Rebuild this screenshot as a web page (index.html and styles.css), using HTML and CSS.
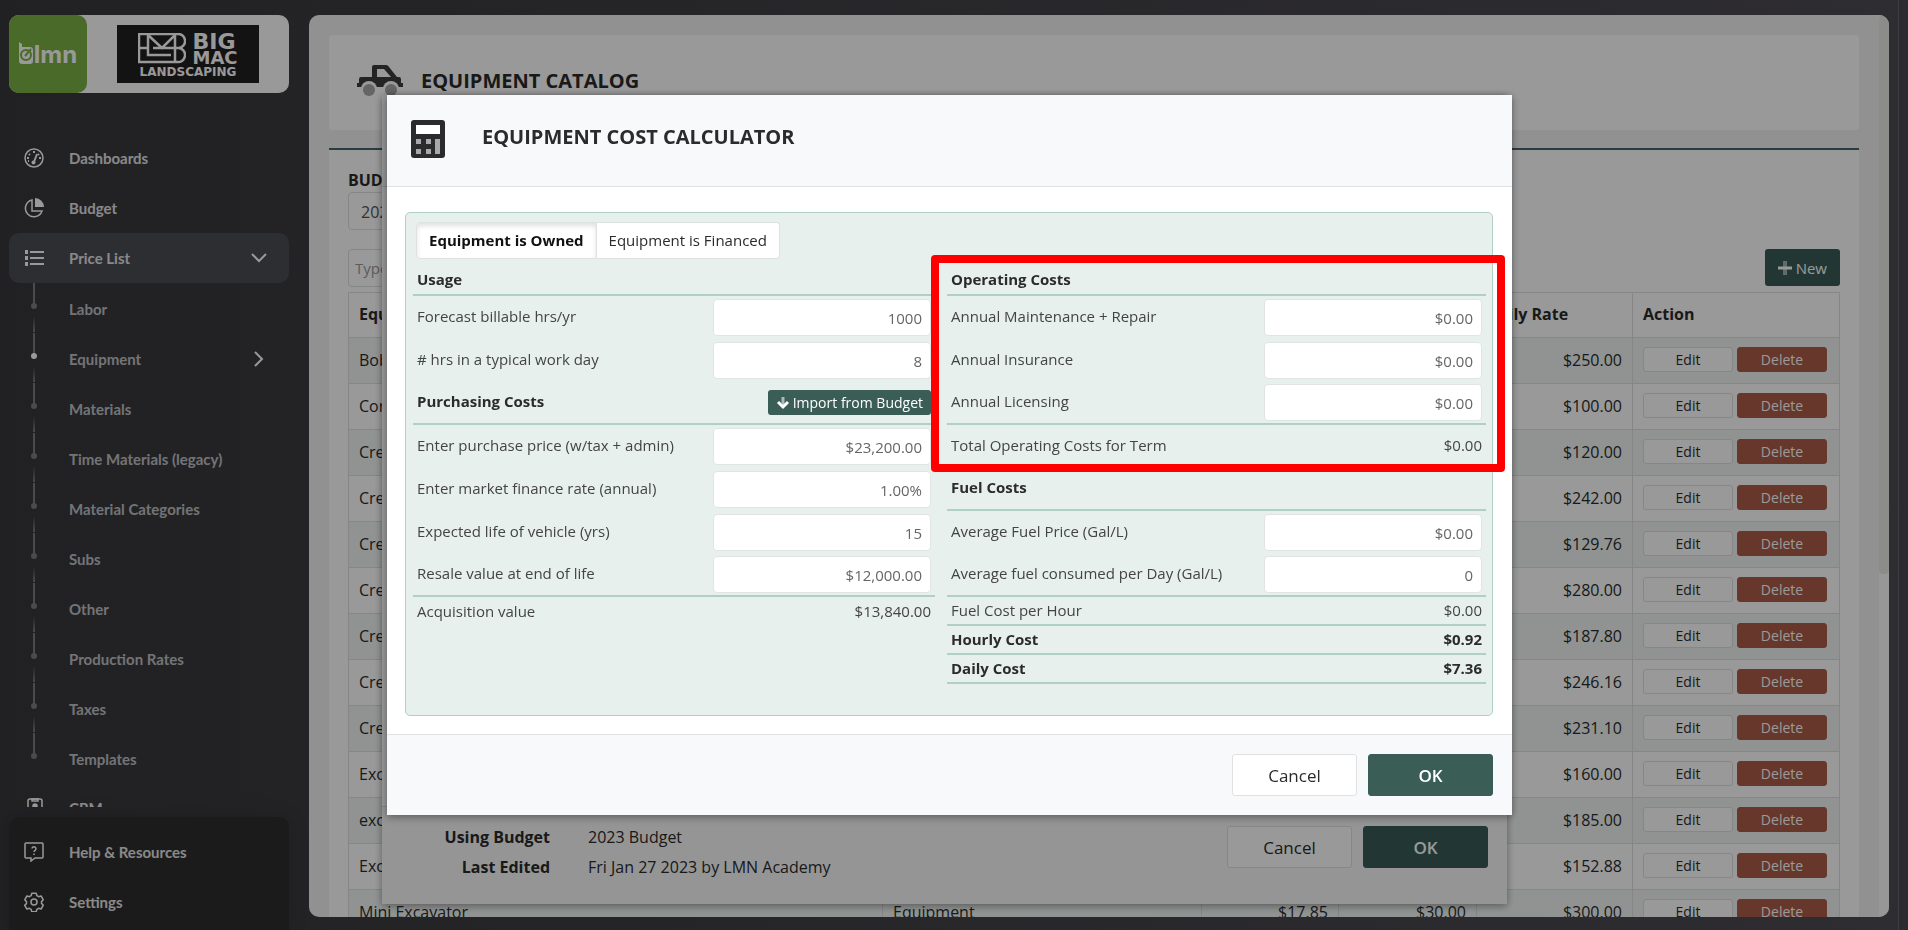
FILE: index.html
```
<!DOCTYPE html>
<html lang="en">
<head>
    <meta charset="UTF-8">
    <meta name="viewport" content="width=device-width, initial-scale=1.0">
    <title>LMN - Equipment Catalog</title>
    <link rel="stylesheet" href="styles.css">
</head>
<body>

<div class="app">
    <aside class="sidebar">
        <div class="brand">
            <div class="brand-lmn">
                <svg width="15" height="24" viewBox="0 0 15 24">
                    <path d="M0 0l3 2v3h8q3 0 3 3v11q0 3-3 3H3q-3 0-3-3z" fill="#fff"/>
                    <circle cx="7" cy="13" r="5" fill="none" stroke="#7ab143" stroke-width="2"/>
                    <path d="M6 14l6-7" stroke="#7ab143" stroke-width="2"/>
                </svg>
                <span>lmn</span>
            </div>
            <div class="brand-company">
                <div class="company-logo">
                    <div class="company-top">
                        <svg width="48" height="31" viewBox="0 0 48 31" fill="none" stroke="#fff" stroke-width="2.500">
                            <path d="M1 1h38a7 7 0 0 1 2 14a7 7 0 0 1-2 14H1z"/>
                            <path d="M10 1v21h23M10 2l14 13L37 2v27M1 15h9M15 15h26"/>
                        </svg>
                        <div class="company-name">
                            <span class="big">BIG</span>
                            <span class="mac">MAC</span>
                        </div>
                    </div>
                    <span class="landscaping">LANDSCAPING</span>
                </div>
            </div>
        </div>

        <nav class="menu">
            <a href="#" class="menu-item">
                <svg class="icon" viewBox="0 0 20 20">
                    <circle cx="10" cy="10" r="9"/>
                    <path d="M10 14l3-8" stroke-width="2"/>
                    <circle cx="9.500" cy="14.500" r="2" fill="#fff" stroke="none"/>
                    <path d="M3 10h2M5 6l1 1M9 4h2M15 10h2M15 6l-1 1M4 13l1 0" stroke-width="2"/>
                </svg>
                Dashboards
            </a>
            <a href="#" class="menu-item">
                <svg class="icon" viewBox="0 0 20 20">
                    <path d="M8 2a8.500 8.500 0 1 0 10 11H8z"/>
                    <path d="M11 0a9 9 0 0 1 9 9h-9z" fill="#fff" stroke="none"/>
                </svg>
                Budget
            </a>
            <a href="#" class="menu-item active">
                <svg class="icon" viewBox="0 0 20 20">
                    <path d="M6 4h14M6 10h14M6 16h14" stroke-width="2"/>
                    <path d="M1 4h3M1 10h3M1 16h3" stroke-width="4"/>
                </svg>
                Price List
                <svg class="chevron" width="16" height="10" viewBox="0 0 16 10"><path d="M1 1l7 7 7-7"/></svg>
            </a>
            <a href="#" class="sub-item">Labor</a>
            <a href="#" class="sub-item current">Equipment
                <svg class="chevron" width="16" height="16" viewBox="0 0 16 16"><path d="M4 1l7 7-7 7"/></svg>
            </a>
            <a href="#" class="sub-item">Materials</a>
            <a href="#" class="sub-item">Time Materials (legacy)</a>
            <a href="#" class="sub-item">Material Categories</a>
            <a href="#" class="sub-item">Subs</a>
            <a href="#" class="sub-item">Other</a>
            <a href="#" class="sub-item">Production Rates</a>
            <a href="#" class="sub-item">Taxes</a>
            <a href="#" class="sub-item">Templates</a>
            <a href="#" class="menu-item">
                <svg class="icon" viewBox="0 0 20 20">
                    <rect x="4" y="1" width="14" height="18" rx="2"/>
                    <path d="M8 1h6v2H8z"/>
                    <circle cx="11" cy="8" r="2" fill="#fff"/>
                    <path d="M7 15a4 4 0 0 1 8 0z" fill="#fff"/>
                </svg>
                CRM
            </a>
        </nav>

        <div class="menu-bottom">
            <a href="#" class="menu-item">
                <svg class="icon" viewBox="0 0 20 20">
                    <path d="M2 1h16a1 1 0 0 1 1 1v13a1 1 0 0 1-1 1h-7l-4 3v-3H2a1 1 0 0 1-1-1V2a1 1 0 0 1 1-1z"/>
                    <path d="M8 6.500a2 2 0 1 1 3 2q-1 .5-1 1.500M10 11.500v1.500"/>
                </svg>
                Help &amp; Resources
            </a>
            <a href="#" class="menu-item">
                <svg class="icon" viewBox="0 0 20 20">
                    <path d="M7.800 1.200h4.400l.7 2.500 1.700 1 2.500-.7 2.200 3.800-1.800 1.800v1.800l1.800 1.800-2.200 3.800-2.500-.7-1.700 1-.7 2.500H7.800l-.7-2.500-1.700-1-2.500.7L.7 13.400l1.800-1.800V9.600L.7 7.800 2.900 4l2.500.7 1.700-1z" stroke-linejoin="round"/>
                    <circle cx="10" cy="10" r="3"/>
                </svg>
                Settings
            </a>
        </div>
    </aside>

    <main class="content">
        <header class="page-header">
            <svg width="46" height="32" viewBox="0 0 46 32">
                <path d="M17 0h12q2 0 3 2l8 10h2q2 0 2 2v4h2v4H0v-4h2v-4q0-2 2-2h11V2q0-2 2-2zM20 4v8h14l-7-8z" fill="#3c3c3c" fill-rule="evenodd"/>
                <circle cx="12" cy="24" r="8" fill="#fff"/>
                <circle cx="34" cy="24" r="8" fill="#fff"/>
                <circle cx="12" cy="25" r="6" fill="#a8a8a8"/>
                <circle cx="34" cy="25" r="6" fill="#a8a8a8"/>
            </svg>
            <h1>EQUIPMENT CATALOG</h1>
        </header>

        <section class="catalog">
            <label class="catalog-label" for="budget">BUDGET</label>
            <select id="budget" class="field">
                <option>2023 Budget</option>
            </select>
            <div class="toolbar">
                <input type="text" class="field filter" placeholder="Type to filter" aria-label="Filter equipment">
                <button class="btn-new">
                    <svg width="14" height="14" viewBox="0 0 14 14">
                        <path d="M7 0v14" stroke="#a0b4ae" stroke-width="4"/>
                        <path d="M0 7h14" stroke="#fff" stroke-width="3"/>
                    </svg>
                    New
                </button>
            </div>

            <table class="equipment">
                <colgroup>
                    <col><col class="col-type"><col class="col-cost"><col class="col-rate"><col class="col-daily"><col class="col-action">
                </colgroup>
                <thead>
                    <tr><th>Equipment</th><th>Type</th><th>Cost</th><th>Hourly Rate</th><th>Daily Rate</th><th>Action</th></tr>
                </thead>
                <tbody>
                    <tr><td>Bobcat</td><td>Equipment</td><td></td><td></td><td>$250.00</td><td><button class="edit">Edit</button><button class="delete">Delete</button></td></tr>
                    <tr><td>Concrete Saw</td><td>Equipment</td><td></td><td></td><td>$100.00</td><td><button class="edit">Edit</button><button class="delete">Delete</button></td></tr>
                    <tr><td>Crew Truck</td><td>Equipment</td><td></td><td></td><td>$120.00</td><td><button class="edit">Edit</button><button class="delete">Delete</button></td></tr>
                    <tr><td>Crew Truck</td><td>Equipment</td><td></td><td></td><td>$242.00</td><td><button class="edit">Edit</button><button class="delete">Delete</button></td></tr>
                    <tr><td>Crew Truck</td><td>Equipment</td><td></td><td></td><td>$129.76</td><td><button class="edit">Edit</button><button class="delete">Delete</button></td></tr>
                    <tr><td>Crew Truck</td><td>Equipment</td><td></td><td></td><td>$280.00</td><td><button class="edit">Edit</button><button class="delete">Delete</button></td></tr>
                    <tr><td>Crew Truck</td><td>Equipment</td><td></td><td></td><td>$187.80</td><td><button class="edit">Edit</button><button class="delete">Delete</button></td></tr>
                    <tr><td>Crew Truck</td><td>Equipment</td><td></td><td></td><td>$246.16</td><td><button class="edit">Edit</button><button class="delete">Delete</button></td></tr>
                    <tr><td>Crew Truck</td><td>Equipment</td><td></td><td></td><td>$231.10</td><td><button class="edit">Edit</button><button class="delete">Delete</button></td></tr>
                    <tr><td>Excavator</td><td>Equipment</td><td></td><td></td><td>$160.00</td><td><button class="edit">Edit</button><button class="delete">Delete</button></td></tr>
                    <tr><td>excavator</td><td>Equipment</td><td></td><td></td><td>$185.00</td><td><button class="edit">Edit</button><button class="delete">Delete</button></td></tr>
                    <tr><td>Excavator</td><td>Equipment</td><td></td><td></td><td>$152.88</td><td><button class="edit">Edit</button><button class="delete">Delete</button></td></tr>
                    <tr><td>Mini Excavator</td><td>Equipment</td><td>$17.85</td><td>$30.00</td><td>$300.00</td><td><button class="edit">Edit</button><button class="delete">Delete</button></td></tr>
                </tbody>
            </table>
        </section>
        <div class="scroll-track"><div class="scroll-thumb"></div></div>
    </main>
    <div class="gutter"></div>
</div>

<!-- Edit equipment dialog, sits under the calculator -->
<div class="layer layer-edit">
    <div class="modal">
        <div class="modal-header"></div>
        <div class="modal-body"></div>
        <div class="modal-footer edit-footer">
            <dl class="meta">
                <dt>Using Budget</dt><dd>2023 Budget</dd>
                <dt>Last Edited</dt><dd>Fri Jan 27 2023 by LMN Academy</dd>
            </dl>
            <button class="btn">Cancel</button>
            <button class="btn btn-primary">OK</button>
        </div>
    </div>
</div>

<!-- Cost calculator dialog -->
<div class="layer layer-calculator">
    <div class="modal" role="dialog" aria-labelledby="calc-title">
        <div class="modal-header">
            <svg width="34" height="38" viewBox="0 0 34 38">
                <rect width="34" height="38" rx="3" fill="#2b2b2d"/>
                <path d="M5 5h24v9H5z" fill="#fff"/>
                <path d="M5 19h5v5H5zM15 19h5v5h-5zM5 29h5v5H5zM15 29h5v5h-5zM24 19h5v15h-5z" fill="#a8a9ab"/>
            </svg>
            <h2 id="calc-title">EQUIPMENT COST CALCULATOR</h2>
        </div>

        <div class="modal-body">
            <div class="calculator">
                <div class="tabs">
                    <button class="tab selected">Equipment is Owned</button><button class="tab">Equipment is Financed</button>
                </div>
                <div class="columns">
                    <div class="column">
                        <div class="row heading first"><h3>Usage</h3></div>
                        <div class="row"><label for="hours">Forecast billable hrs/yr</label><input type="text" id="hours" value="1000"></div>
                        <div class="row"><label for="day"># hrs in a typical work day</label><input type="text" id="day" value="8"></div>
                        <div class="row heading">
                            <h3>Purchasing Costs</h3>
                            <button class="btn-import">
                                <svg width="14" height="14" viewBox="0 0 14 14" fill="none">
                                    <path d="M7 1v10" stroke="#a9bbb6" stroke-width="3"/>
                                    <path d="M2 6l5 5 5-5" stroke="#fff" stroke-width="3"/>
                                </svg>
                                Import from Budget
                            </button>
                        </div>
                        <div class="row"><label for="price">Enter purchase price (w/tax + admin)</label><input type="text" id="price" value="$23,200.00"></div>
                        <div class="row"><label for="rate">Enter market finance rate (annual)</label><input type="text" id="rate" value="1.00%"></div>
                        <div class="row"><label for="life">Expected life of vehicle (yrs)</label><input type="text" id="life" value="15"></div>
                        <div class="row ruled"><label for="resale">Resale value at end of life</label><input type="text" id="resale" value="$12,000.00"></div>
                        <div class="row short"><span>Acquisition value</span><span>$13,840.00</span></div>
                    </div>

                    <div class="column">
                        <div class="highlight">
                            <div class="row heading first"><h3>Operating Costs</h3></div>
                            <div class="row"><label for="repair">Annual Maintenance + Repair</label><input type="text" id="repair" value="$0.00"></div>
                            <div class="row"><label for="insurance">Annual Insurance</label><input type="text" id="insurance" value="$0.00"></div>
                            <div class="row ruled"><label for="licensing">Annual Licensing</label><input type="text" id="licensing" value="$0.00"></div>
                            <div class="row"><span>Total Operating Costs for Term</span><span>$0.00</span></div>
                        </div>
                        <div class="row heading"><h3>Fuel Costs</h3></div>
                        <div class="row"><label for="fuel-price">Average Fuel Price (Gal/L)</label><input type="text" id="fuel-price" value="$0.00"></div>
                        <div class="row ruled"><label for="fuel-used">Average fuel consumed per Day (Gal/L)</label><input type="text" id="fuel-used" value="0"></div>
                        <div class="row short ruled"><span>Fuel Cost per Hour</span><span>$0.00</span></div>
                        <div class="row short ruled total"><span>Hourly Cost</span><span>$0.92</span></div>
                        <div class="row short ruled total"><span>Daily Cost</span><span>$7.36</span></div>
                    </div>
                </div>
            </div>
        </div>

        <div class="modal-footer">
            <button class="btn">Cancel</button>
            <button class="btn btn-primary">OK</button>
        </div>
    </div>
</div>

</body>
</html>
```

FILE: styles.css
```
* {
    box-sizing: border-box;
}
body {
    margin: 0;
    height: 100vh;
    overflow: hidden;
    font-family: "Open Sans", sans-serif;
    font-size: 16px;
    color: #2b2b2b;
}
h1, h2, h3, dl, dd {
    margin: 0;
}
button, input, select {
    font-family: inherit;
}
.app {
    display: flex;
    height: 100vh;
    background: linear-gradient(90deg, #38383b, #4d4b53);
}

/* Sidebar */
.sidebar {
    width: 280px;
    margin: 15px 20px 0 9px;
    display: flex;
    flex-direction: column;
    flex-shrink: 0;
}
.brand {
    display: flex;
    height: 78px;
    flex-shrink: 0;
    border-radius: 10px;
    background: #fff;
}
.brand-lmn {
    display: flex;
    align-items: center;
    justify-content: center;
    width: 78px;
    border-radius: 10px;
    background: #7ab143;
    color: #fff;
    font-family: Inter, sans-serif;
    font-size: 24px;
    font-weight: 700;
}
.brand-company {
    flex: 1;
    display: flex;
    align-items: center;
    justify-content: center;
}
.company-logo {
    width: 142px;
    height: 58px;
    padding-top: 8px;
    background: #212121;
    color: #fff;
    font-family: "DejaVu Sans", sans-serif;
    font-weight: 700;
    text-align: center;
}
.company-top {
    display: flex;
    justify-content: center;
    gap: 6px;
    height: 32px;
}
.company-name {
    display: flex;
    flex-direction: column;
    text-align: left;
}
.big {
    font-size: 22px;
    line-height: 17px;
}
.mac {
    font-size: 18px;
    line-height: 16px;
}
.landscaping {
    display: block;
    font-size: 12px;
    line-height: 14px;
}
.menu {
    flex: 1;
    min-height: 0;
    margin: 40px 0 10px;
    overflow: hidden;
}
.menu-item, .sub-item {
    position: relative;
    display: flex;
    align-items: center;
    height: 50px;
    padding-left: 60px;
    font-family: Lato, sans-serif;
    font-size: 15px;
    font-weight: 700;
    color: #e4e4e6;
    text-decoration: none;
}
.menu-item.active {
    border-radius: 10px;
    background: #4b4d53;
}
.icon {
    position: absolute;
    left: 15px;
    width: 20px;
    height: 20px;
    fill: none;
    stroke: #fff;
    stroke-width: 1.5;
}
.chevron {
    position: absolute;
    right: 22px;
    fill: none;
    stroke: #fff;
    stroke-width: 2;
}
.sub-item {
    padding-top: 2px;
    color: #c0c2c6;
}
.sub-item::before {
    content: "";
    position: absolute;
    left: 24px;
    top: 0;
    width: 2px;
    height: 50px;
    background: linear-gradient(#7c7d81 24px, transparent 24px, transparent 30px, #38383b 33px, #7c7d81 49px, transparent 49px);
}
.sub-item:nth-last-child(2)::before {
    height: 24px;
}
.sub-item::after {
    content: "";
    position: absolute;
    left: 22px;
    top: 20px;
    width: 6px;
    height: 6px;
    border-radius: 50%;
    background: #7c7d81;
}
.sub-item.current::after {
    background: #fff;
}
.menu-bottom {
    padding: 10px 0 3px;
    border-radius: 10px 10px 0 0;
    background: #2e2e2e;
    box-shadow: 0 0 20px rgba(0, 0, 0, 0.15);
}

/* Page content */
.content {
    position: relative;
    flex: 1;
    min-width: 0;
    margin: 15px 9px 13px 0;
    padding: 20px 30px 0 20px;
    border-radius: 10px;
    background: #f2f2f2;
    overflow: hidden;
}
.gutter {
    width: 10px;
    border-left: 1px solid #66646a;
    background: #4a4952;
}
.scroll-track {
    position: absolute;
    top: 0;
    right: 0;
    bottom: 0;
    width: 10px;
    background: #fcfcfc;
}
.scroll-thumb {
    height: 62%;
    border-radius: 4px;
    background: #e9e9e7;
}
.page-header {
    display: flex;
    align-items: center;
    gap: 18px;
    height: 95px;
    padding: 0 28px 4px;
    border-radius: 3px;
    background: #fff;
}
.page-header h1, .modal-header h2 {
    font-size: 20px;
    line-height: 34px;
    font-weight: 700;
}
.catalog {
    margin-top: 18px;
    padding: 18px 19px 0;
    border-top: 2px solid #466570;
    background: #fff;
}
.catalog-label {
    display: block;
    line-height: 24px;
    font-weight: 700;
}
.field {
    width: 300px;
    height: 38px;
    padding: 2px 8px 0;
    border: 1px solid #dfdfdf;
    border-radius: 4px;
    background: #fff;
    font-size: 16px;
    color: #555;
}
.filter {
    padding: 0 6px;
    font-size: 15px;
}
.filter::placeholder {
    color: #999;
}
.toolbar {
    display: flex;
    justify-content: space-between;
    margin: 19px 0 5px;
}
.btn-new {
    display: flex;
    align-items: center;
    gap: 4px;
    height: 37px;
    padding: 0 13px;
    border: none;
    border-radius: 3px;
    background: #395d55;
    color: #fff;
    font-size: 15px;
}
.equipment {
    width: 100%;
    table-layout: fixed;
    border-collapse: collapse;
}
.col-type { width: 319px; }
.col-cost { width: 137px; }
.col-rate { width: 138px; }
.col-daily { width: 156px; }
.col-action { width: 207px; }
.equipment th, .equipment td {
    height: 46px;
    padding: 0 10px 2px;
    border: 1px solid #dfdfdf;
}
.equipment th {
    height: 45px;
    text-align: left;
    font-weight: 700;
}
.equipment tbody tr:nth-child(odd) {
    background: #f0f6f4;
}
.equipment td:nth-child(3), .equipment td:nth-child(4), .equipment td:nth-child(5) {
    text-align: right;
}
.edit, .delete {
    width: 90px;
    height: 25px;
    padding: 0;
    border: 1px solid #dfdfdf;
    border-radius: 3px;
    background: #fff;
    font-size: 14px;
    color: #2b2b2b;
}
.delete {
    margin-left: 4px;
    border-color: #aa5d46;
    background: #aa5d46;
    color: #fff;
}

/* Dialogs */
.layer {
    position: fixed;
    inset: 0;
    display: flex;
    justify-content: center;
    align-items: flex-start;
    padding-top: 95px;
}
.layer-edit {
    padding-right: 19px;
}
.layer-calculator {
    padding-right: 9px;
    background: rgba(0, 0, 0, 0.4);
}
.modal {
    width: 1125px;
    max-width: 96%;
    background: #fff;
    box-shadow: 0 2px 8px rgba(0, 0, 0, 0.4);
}
.modal-header {
    display: flex;
    align-items: flex-start;
    gap: 37px;
    height: 92px;
    padding: 25px 24px 0;
    border-bottom: 1px solid #e0e2e4;
    background: #f8f9fb;
}
.modal-body {
    padding: 25px 19px 18px 18px;
}
.layer-edit .modal-body {
    height: 619px;
}
.modal-footer {
    display: flex;
    justify-content: flex-end;
    gap: 11px;
    padding: 19px;
    border-top: 1px solid #e0e2e4;
    background: #f8f9fb;
}
.edit-footer {
    padding-bottom: 36px;
}
.meta {
    flex: 1;
    display: grid;
    grid-template-columns: 149px 1fr;
    column-gap: 38px;
    line-height: 30px;
    margin-top: -4px;
    height: 46px;
}
.meta dt {
    text-align: right;
    font-weight: 700;
}
.btn {
    width: 125px;
    height: 42px;
    border: 1px solid #dfe1e3;
    border-radius: 3px;
    background: #fff;
    color: #2b2b2b;
    font-size: 17px;
}
.btn-primary {
    border-color: #3a5d55;
    background: #3a5d55;
    color: #fff;
    font-weight: 600;
}

/* Calculator */
.calculator {
    min-height: 504px;
    padding: 9px 6px 0 7px;
    border: 1px solid #b0cfc5;
    border-radius: 5px;
    background: #e8f0ed;
    font-size: 15px;
}
.tabs {
    display: flex;
    margin-left: 3px;
}
.tab {
    height: 37px;
    padding: 0 12px 2px;
    border: 1px solid #dde2e0;
    border-left: none;
    border-radius: 0 4px 4px 0;
    background: #fff;
    color: #2b2b2b;
    font-size: 15px;
}
.tab.selected {
    border-left: 1px solid #dde2e0;
    border-radius: 4px 0 0 4px;
    box-shadow: inset 0 3px 5px rgba(0, 0, 0, 0.12);
    font-weight: 700;
    color: #111;
}
.columns {
    display: grid;
    grid-template-columns: 522fr 539fr;
    column-gap: 12px;
}
.row {
    display: flex;
    justify-content: space-between;
    align-items: center;
    height: 43px;
    padding: 0 4px;
    color: #444;
}
.row.heading, .row.ruled {
    border-bottom: 2px solid #b0cfc5;
}
.row.first {
    height: 37px;
    padding-top: 8px;
}
.row.short {
    height: 29px;
}
.row label, .row h3, .row span {
    padding-bottom: 3px;
}
.row.short span {
    padding-bottom: 1px;
}
.row.total, .row h3 {
    font-size: 15px;
    font-weight: 700;
    color: #2b2b2b;
}
.row input {
    width: 218px;
    height: 37px;
    padding: 0 8px;
    border: 1px solid #e0e4e2;
    border-radius: 4px;
    background: #fff;
    color: #666;
    font-size: 15px;
    text-align: right;
}
.btn-import {
    display: flex;
    align-items: center;
    gap: 3px;
    height: 25px;
    padding: 0 8px;
    border: none;
    border-radius: 3px;
    background: #3a5d55;
    color: #fff;
    font-size: 14px;
}
.highlight {
    position: relative;
}
/* Red frame round the operating costs */
.highlight::after {
    content: "";
    position: absolute;
    inset: -4px -19px -4px -16px;
    border: 8px solid #f00;
    border-radius: 4px;
    pointer-events: none;
}
```
